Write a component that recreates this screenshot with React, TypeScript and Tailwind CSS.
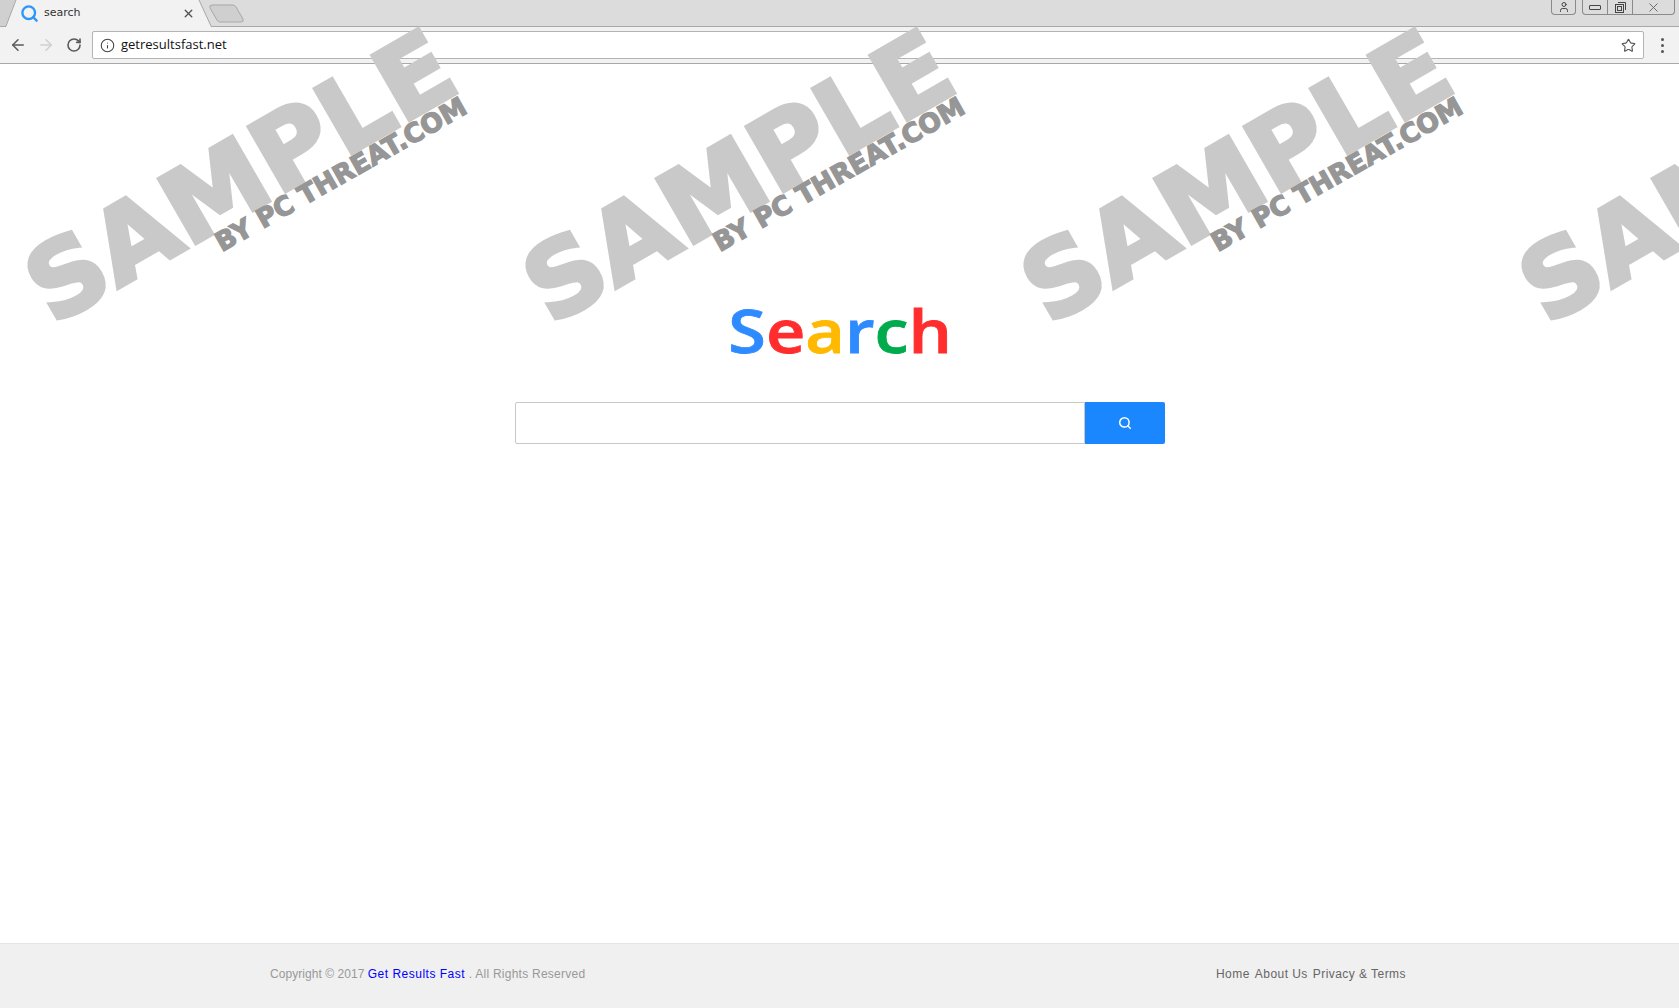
import { ArrowLeft, ArrowRight, Info, RotateCw, Search, Star, User, X } from "lucide-react"

const marks = [30, 528, 1026, 1524]

const letters = [
  { ch: "S", color: "text-[#2e8bff]" },
  { ch: "e", color: "text-[#ff2d2d]" },
  { ch: "a", color: "text-[#ffb900]" },
  { ch: "r", color: "text-[#2e8bff]" },
  { ch: "c", color: "text-[#00ab4e]" },
  { ch: "h", color: "text-[#ff2d2d]" },
]

function Watermark({ left }: { left: number }) {
  return (
    <div className="absolute top-0 pointer-events-none select-none" style={{ left }}>
      <div className="absolute left-[31px] top-[201px] origin-bottom-left [transform:rotate(-30deg)_scale(1.39,1.36)] [-webkit-text-stroke:3px_#c9c9c9] font-['DejaVu_Sans',sans-serif] font-bold text-[75px] leading-[75px] text-[#c9c9c9] whitespace-nowrap">
        SAMPLE
      </div>
      <div className="absolute left-[194px] top-[168px] origin-bottom-left [transform:rotate(-29.5deg)_scale(1.1,1.1)] [-webkit-text-stroke:1.2px_#969696] font-['DejaVu_Sans',sans-serif] font-bold text-[24px] leading-[24px] text-[#969696] whitespace-nowrap">
        BY PC THREAT.COM
      </div>
    </div>
  )
}

function TabStrip() {
  return (
    <div className="relative h-[27px] bg-[#dcdcdc] border-b border-[#a8a8a8] shrink-0">
      <svg className="absolute left-0 top-0" width="250" height="27" viewBox="0 0 250 27">
        <path d="M0 0 H16 L6 26 H0 Z" fill="#d0d0d0" />
        <path d="M6 27 L16 0 H199 L211 27 Z" fill="#f2f2f2" />
        <path d="M6 26 L16 0 M199 0 L211 26" stroke="#a8a8a8" fill="none" />
        <path d="M215 5 H233 Q235 5 236 7 L243 19 Q244 22 241 22 H220 Q218 22 217 20 L210 8 Q209 5 212 5 Z" fill="#cfcfcf" stroke="#a8a8a8" />
      </svg>
      <div className="relative flex items-center h-[26px] pl-[20px] w-[200px]">
        <Search size={19} strokeWidth={3} className="text-[#2f97f5] shrink-0" />
        <span className="ml-[5px] text-[11px] font-['DejaVu_Sans',sans-serif] text-[#333] flex-1">search</span>
        <X size={13} strokeWidth={2.6} className="text-[#555] mr-[5px]" />
      </div>
      <div className="absolute right-[4px] top-0 flex gap-[6px]">
        <div className="w-[25px] h-[15px] flex items-center justify-center border border-t-0 border-[#8a8a8a] rounded-b-[4px]">
          <User size={12} className="text-[#444]" />
        </div>
        <div className="flex h-[15px] border border-t-0 border-[#8a8a8a] rounded-b-[4px]">
          <div className="w-[25px] flex items-center justify-center border-r border-[#8a8a8a]">
            <div className="w-[12px] h-[5px] border border-[#444] rounded-[1px]" />
          </div>
          <div className="w-[25px] flex items-center justify-center border-r border-[#8a8a8a]">
            <svg width="13" height="13" viewBox="0 0 13 13" fill="none" stroke="#444">
              <rect x="1.5" y="3.5" width="8" height="8" />
              <rect x="3.5" y="5.5" width="4" height="4" />
              <path d="M4 1.5 H11.5 V9" />
            </svg>
          </div>
          <div className="w-[41px] flex items-center justify-center">
            <X size={15} strokeWidth={1.5} className="text-[#666]" />
          </div>
        </div>
      </div>
    </div>
  )
}

function Toolbar() {
  return (
    <div className="h-[37px] bg-[#f2f2f2] border-b border-[#a8a8a8] flex items-center shrink-0">
      <ArrowLeft size={18} strokeWidth={2} className="ml-[9px] text-[#5a5a5a]" />
      <ArrowRight size={18} strokeWidth={2} className="ml-[10px] text-[#cfcfcf]" />
      <RotateCw size={16} strokeWidth={2.4} className="ml-[11px] text-[#5a5a5a]" />
      <div className="ml-[10px] w-[1552px] h-[28px] bg-white border border-[#b4b4b4] rounded-[2px] flex items-center">
        <Info size={15} strokeWidth={1.7} className="ml-[7px] text-[#444]" />
        <span className="ml-[6px] flex-1 text-[13px] font-['Open_Sans',sans-serif] text-[#111]">getresultsfast.net</span>
        <Star size={15} strokeWidth={1.8} className="mr-[7px] text-[#555]" />
      </div>
      <div className="ml-[17px] flex flex-col gap-[3px]">
        <div className="w-[3px] h-[3px] rounded-full bg-[#555]" />
        <div className="w-[3px] h-[3px] rounded-full bg-[#555]" />
        <div className="w-[3px] h-[3px] rounded-full bg-[#555]" />
      </div>
    </div>
  )
}

export default function App() {
  return (
    <div className="relative h-[1008px] w-full overflow-hidden flex flex-col bg-white font-['Liberation_Sans',sans-serif]">
      <TabStrip />
      <Toolbar />
      <main className="relative flex-1 flex flex-col items-center">
        {marks.map((left) => (
          <Watermark key={left} left={left} />
        ))}
        <div className="relative mt-[224px] ml-[2px] flex text-[60px] leading-[84px] font-['Open_Sans',sans-serif] font-semibold [transform:scaleX(1.14)] [-webkit-text-stroke:0.8px]">
          {letters.map((l, i) => (
            <span key={i} className={l.color}>
              {l.ch}
            </span>
          ))}
        </div>
        <div className="relative mt-[30px] flex w-[650px] h-[42px]">
          <div className="flex-1 bg-white border border-[#c8c8c8] rounded-l-[2px]" />
          <div className="w-[80px] bg-[#1a87ff] rounded-r-[2px] flex items-center justify-center">
            <Search size={14} strokeWidth={2.6} className="text-white" />
          </div>
        </div>
      </main>
      <footer className="h-[65px] shrink-0 bg-[#f0f0f0] border-t border-[#e4e4e4] flex items-center justify-between pb-[4px] pl-[270px] pr-[273px] text-[12px]">
        <div className="text-[#999] tracking-[0.25px]">
          <span className="tracking-[0.05px]">Copyright © 2017 </span>
          <span className="text-[#0000ff] tracking-[0.5px]">Get Results Fast</span> . All Rights Reserved
        </div>
        <div className="flex gap-[5px] text-[#666] tracking-[0.45px]">
          <span>Home</span>
          <span>About Us</span>
          <span>Privacy &amp; Terms</span>
        </div>
      </footer>
    </div>
  )
}
